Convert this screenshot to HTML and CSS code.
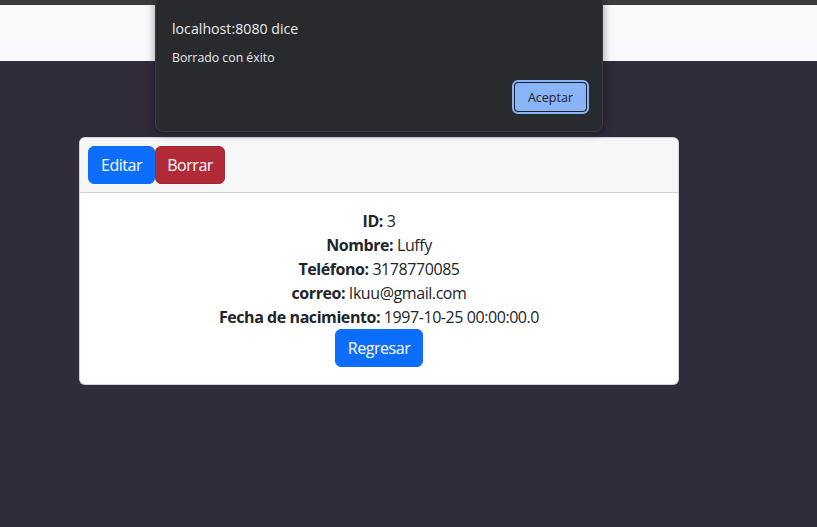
FILE: index.html
```html
<!DOCTYPE html>
<html lang="es">
<head>
<meta charset="utf-8">
<link rel="stylesheet" href="styles.css">
</head>
<body>
<div class="topstrip"></div>
<nav class="navbar"></nav>
<main class="main">
  <div class="card">
    <div class="card-header">
      <button class="btn btn-primary">Editar</button>
      <button class="btn btn-danger">Borrar</button>
    </div>
    <div class="card-body">
      <p><b>ID:</b> 3</p>
      <p><b>Nombre:</b> Luffy</p>
      <p><b>Teléfono:</b> 3178770085</p>
      <p><b>correo:</b> Ikuu@gmail.com</p>
      <p><b>Fecha de nacimiento:</b> 1997-10-25 00:00:00.0</p>
      <button class="btn btn-primary">Regresar</button>
    </div>
  </div>
</main>
<div class="dialog">
  <div class="dialog-title">localhost:8080 dice</div>
  <div class="dialog-msg">Borrado con éxito</div>
  <div class="dialog-actions"><button class="dialog-btn">Aceptar</button></div>
</div>
</body>
</html>
```
FILE: styles.css
```css
html, body {
  margin: 0;
  padding: 0;
  height: 100%;
}
body {
  background: #302b3b;
  font-family: "Open Sans", "Noto Sans", sans-serif;
  color: #212529;
  position: relative;
  overflow: hidden;
}
.topstrip {
  height: 5px;
  background: #3b3b3d;
}
.navbar {
  height: 56px;
  background: #f8f9fa;
}
.main {
  padding: 76px 0 0 79px;
}
.card {
  width: 598px;
  background: #fff;
  border: 1px solid rgba(0,0,0,.175);
  border-radius: 6px;
  overflow: hidden;
}
.card-header {
  background: #f7f7f7;
  border-bottom: 1px solid #d2d2d2;
  padding: 8px;
  display: flex;
  height: 38px;
}
.btn {
  font-family: inherit;
  font-size: 16px;
  line-height: 24px;
  letter-spacing: -0.45px;
  padding: 6px 12px;
  border-radius: 6px;
  border: 1px solid transparent;
  color: #fff;
  cursor: pointer;
}
.btn-primary {
  background: #0d6efd;
  border-color: #0d6efd;
}
.btn-danger {
  background: #b02a37;
  border-color: #a52834;
  padding: 6px 11px;
}
.card-body {
  text-align: center;
  padding: 16px 16px 17px;
  font-size: 16px;
  line-height: 24px;
  letter-spacing: -0.43px;
}
.card-body p {
  margin: 0;
}
.card-body b {
  font-weight: 700;
}
.dialog {
  position: absolute;
  left: 155px;
  top: -8px;
  width: 446px;
  height: 138px;
  background: #292a2d;
  border: 1px solid #3c3d40;
  border-radius: 8px;
  box-shadow: 0 2px 8px rgba(0,0,0,.4);
  font-family: "Open Sans", "Noto Sans", sans-serif;
  color: #e8eaed;
}
.dialog-title {
  padding: 24px 0 0 16px;
  font-size: 14.2px;
  line-height: 24px;
}
.dialog-msg {
  padding: 8px 0 0 16px;
  font-size: 12.3px;
  line-height: 18px;
}
.dialog-actions {
  display: flex;
  justify-content: flex-end;
  padding: 15px 15px 0 0;
}
.dialog-btn {
  font-family: inherit;
  font-size: 12.5px;
  background: #8ab4f8;
  color: #202124;
  border: 1px solid #202124;
  outline: 2px solid #8ab4f8;
  border-radius: 4px;
  width: 73px;
  height: 30px;
  padding: 0;
}
```
